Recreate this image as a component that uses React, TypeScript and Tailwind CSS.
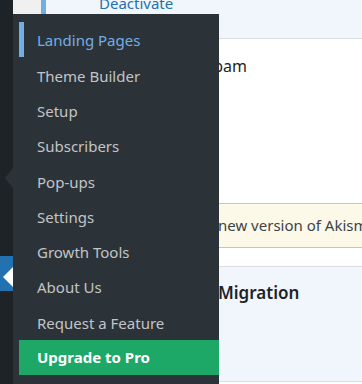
const items = [
  'Landing Pages',
  'Theme Builder',
  'Setup',
  'Subscribers',
  'Pop-ups',
  'Settings',
  'Growth Tools',
  'About Us',
  'Request a Feature',
]

export default function App() {
  return (
    <div
      className="relative flex h-[384px] w-[362px] overflow-hidden bg-white text-[15px]"
      style={{ fontFamily: '"Noto Sans", "Open Sans", Arial, sans-serif' }}
    >
      {/* admin sidebar strip */}
      <div className="relative flex w-[13px] shrink-0 flex-col bg-[#1d2327]">
        <div className="h-[256px]" />
        <div className="relative h-[35px] bg-[#2271b1]" />
        {/* current item arrow */}
        <svg className="absolute left-0 top-[266px]" width="13" height="22" viewBox="0 0 13 22">
          <polygon points="13,1 3,11 13,21" fill="#fff" />
        </svg>
        {/* flyout pointer */}
        <svg className="absolute left-0 top-[167px]" width="13" height="22" viewBox="0 0 13 22">
          <polygon points="13,1 5,11 13,21" fill="#2c3338" />
        </svg>
      </div>

      {/* page content behind the flyout */}
      <div className="flex min-w-0 flex-1 flex-col">
        <div className="flex h-[38px] shrink-0">
          <div className="w-[28px] bg-[#f0f0f1]" />
          <div className="flex flex-1 border-l-[5px] border-[#72aee6] bg-[#f0f6fc] pl-[53px]">
            <span className="-mt-[7px] text-[15px] leading-[20px] text-[#2271b1]">Deactivate</span>
          </div>
        </div>
        <div className="h-[1px] bg-[#dcdcde]" />
        <div className="flex h-[164px] flex-col bg-white">
          <div className="mt-[15px] flex w-[234px] justify-end">
            <span className="whitespace-nowrap text-[16px] leading-[24px] text-[#1d2327]">Spam</span>
          </div>
        </div>
        <div className="flex h-[45px] items-center border-y border-[#c3c4c7] bg-[#fcf9e8] pl-[205px]">
          <span className="whitespace-nowrap text-[15px] text-[#3c434a]">new version of Akismet Anti-Spam is available.</span>
        </div>
        <div className="h-[18px] bg-white" />
        <div className="flex h-[116px] flex-col border-y border-[#dcdcde] bg-[#f0f6fc] pl-[205px] pt-[14px]">
          <span className="whitespace-nowrap text-[17px] font-semibold leading-[24px] text-[#1d2327]">Migration</span>
        </div>
        <div className="flex-1 bg-white" />
      </div>

      {/* submenu flyout */}
      <div className="absolute left-[13px] top-[14px] h-[380px] w-[206px] bg-[#2c3338] pt-[8px]">
        <ul className="flex flex-col">
          {items.map((label, i) => (
            <li
              key={label}
              className={
                i === 0
                  ? 'ml-[6px] flex h-[35.3px] items-center border-l-[5px] border-[#72aee6] pl-[13px] pt-[2px] text-[#72aee6]'
                  : 'ml-[6px] flex h-[35.3px] items-center pl-[18px] pt-[2px] text-[#c3c4c7]'
              }
            >
              {label}
            </li>
          ))}
          <li className="ml-[6px] flex h-[35px] items-center bg-[#1da867] pl-[18px] font-bold text-white">
            Upgrade to Pro
          </li>
        </ul>
      </div>
    </div>
  )
}
